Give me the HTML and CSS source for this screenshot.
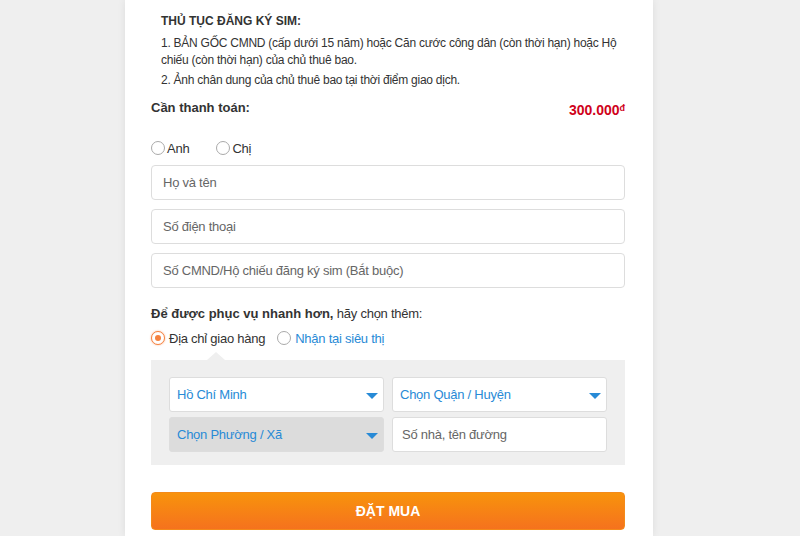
FILE: index.html
```html
<!DOCTYPE html>
<html lang="vi">
<head>
<meta charset="utf-8">
<title>Đặt mua SIM</title>
<link rel="stylesheet" href="styles.css">
</head>
<body>
<div class="panel">
  <div class="rules">
    <div class="rules-title">THỦ TỤC ĐĂNG KÝ SIM:</div>
    <p>1. BẢN GỐC CMND (cấp dưới 15 năm) hoặc Căn cước công dân (còn thời hạn) hoặc Hộ chiếu (còn thời hạn) của chủ thuê bao.</p>
    <p>2. Ảnh chân dung của chủ thuê bao tại thời điểm giao dịch.</p>
  </div>
  <div class="total">
    <span class="total-label">Cần thanh toán:</span>
    <span class="total-price">300.000<sup>đ</sup></span>
  </div>
  <div class="gender">
    <label class="radio"><span class="dot"></span>Anh</label>
    <label class="radio"><span class="dot"></span>Chị</label>
  </div>
  <div class="fields">
    <div class="field">Họ và tên</div>
    <div class="field">Số điện thoại</div>
    <div class="field">Số CMND/Hộ chiếu đăng ký sim (Bắt buộc)</div>
  </div>
  <div class="more"><b>Để được phục vụ nhanh hơn,</b> hãy chọn thêm:</div>
  <div class="delivery">
    <label class="radio on"><span class="dot"></span>Địa chỉ giao hàng</label>
    <label class="radio blue"><span class="dot"></span>Nhận tại siêu thị</label>
  </div>
  <div class="address">
    <div class="sel">Hồ Chí Minh<span class="caret"></span></div>
    <div class="sel">Chọn Quận / Huyện<span class="caret"></span></div>
    <div class="sel disabled">Chọn Phường / Xã<span class="caret"></span></div>
    <div class="sel text">Số nhà, tên đường</div>
  </div>
  <div class="btn">ĐẶT MUA</div>
</div>
</body>
</html>
```
FILE: styles.css
```css
* { box-sizing: border-box; }
html, body { margin: 0; padding: 0; }
body {
  background: #efefef;
  font-family: "Liberation Sans", Arial, sans-serif;
  color: #333;
  height: 536px;
  overflow: hidden;
  letter-spacing: -0.25px;
}
.panel {
  width: 528px;
  margin-left: 125px;
  height: 536px;
  background: #fff;
  box-shadow: 0 0 8px rgba(0,0,0,0.08);
  padding: 13px 28px 0 26px;
}
.rules { padding-left: 10px; font-size: 12px; line-height: 17px; }
.rules-title { font-weight: bold; margin-bottom: 5px; letter-spacing: 0; }
.rules p { margin: 0 0 4px; }
.rules p + p { margin-top: -1px; }
.total {
  display: flex;
  justify-content: space-between;
  align-items: center;
  margin-top: 8px;
  height: 20px;
}
.total-label { font-weight: bold; font-size: 13px; letter-spacing: 0; }
.total-price { color: #d0021b; font-weight: bold; font-size: 14px; margin-top: 5px; letter-spacing: 0; }
.total-price sup { font-size: 9px; vertical-align: 4px; }
.gender { display: flex; gap: 27px; margin-top: 22px; font-size: 13px; height: 18px; align-items: center; }
.radio { display: flex; align-items: center; gap: 2px; font-size: 13px; }
.dot {
  width: 14px; height: 14px;
  border: 1px solid #aaa;
  border-radius: 50%;
  background: #fff;
  position: relative;
}
.radio.on .dot { border-color: #f5813f; box-shadow: 0 0 2px rgba(245,129,63,0.6); }
.radio.on .dot::after {
  content: "";
  position: absolute;
  left: 3px; top: 3px;
  width: 6px; height: 6px;
  border-radius: 50%;
  background: #f5813f;
}
.radio.blue { color: #288ad6; }
.fields { display: flex; flex-direction: column; gap: 9px; margin-top: 8px; }
.field {
  height: 35px;
  border: 1px solid #ddd;
  border-radius: 4px;
  padding: 0 11px;
  display: flex;
  align-items: center;
  font-size: 13px;
  color: #666;
}
.more { font-size: 13px; margin-top: 18px; height: 18px; }
.more b { letter-spacing: 0; }
.delivery { display: flex; gap: 12px; margin-top: 5px; height: 18px; align-items: center; }
.delivery .radio { gap: 4px; }
.address {
  position: relative;
  margin-top: 13px;
  background: #efefef;
  padding: 17px 18px 13px;
  display: grid;
  grid-template-columns: 1fr 1fr;
  column-gap: 8px;
  row-gap: 5px;
}
.address::before {
  content: "";
  position: absolute;
  left: 56px;
  top: -8px;
  border-left: 9px solid transparent;
  border-right: 9px solid transparent;
  border-bottom: 8px solid #efefef;
}
.sel {
  position: relative;
  height: 35px;
  background: #fff;
  border: 1px solid #ddd;
  border-radius: 3px;
  display: flex;
  align-items: center;
  padding: 0 7px;
  font-size: 13px;
  color: #288ad6;
}
.sel.disabled { background: #dcdcdc; }
.sel.text { color: #666; padding-left: 9px; }
.caret {
  position: absolute;
  right: 5px;
  top: 15px;
  border-left: 6px solid transparent;
  border-right: 6px solid transparent;
  border-top: 6px solid #288ad6;
}
.btn {
  margin-top: 27px;
  height: 38px;
  border-radius: 4px;
  background: linear-gradient(#f8930c, #f5721e);
  color: #fff;
  font-weight: bold;
  font-size: 14px;
  letter-spacing: 0;
  display: flex;
  align-items: center;
  justify-content: center;
  border: 1px solid #f48a1a;
}
```
